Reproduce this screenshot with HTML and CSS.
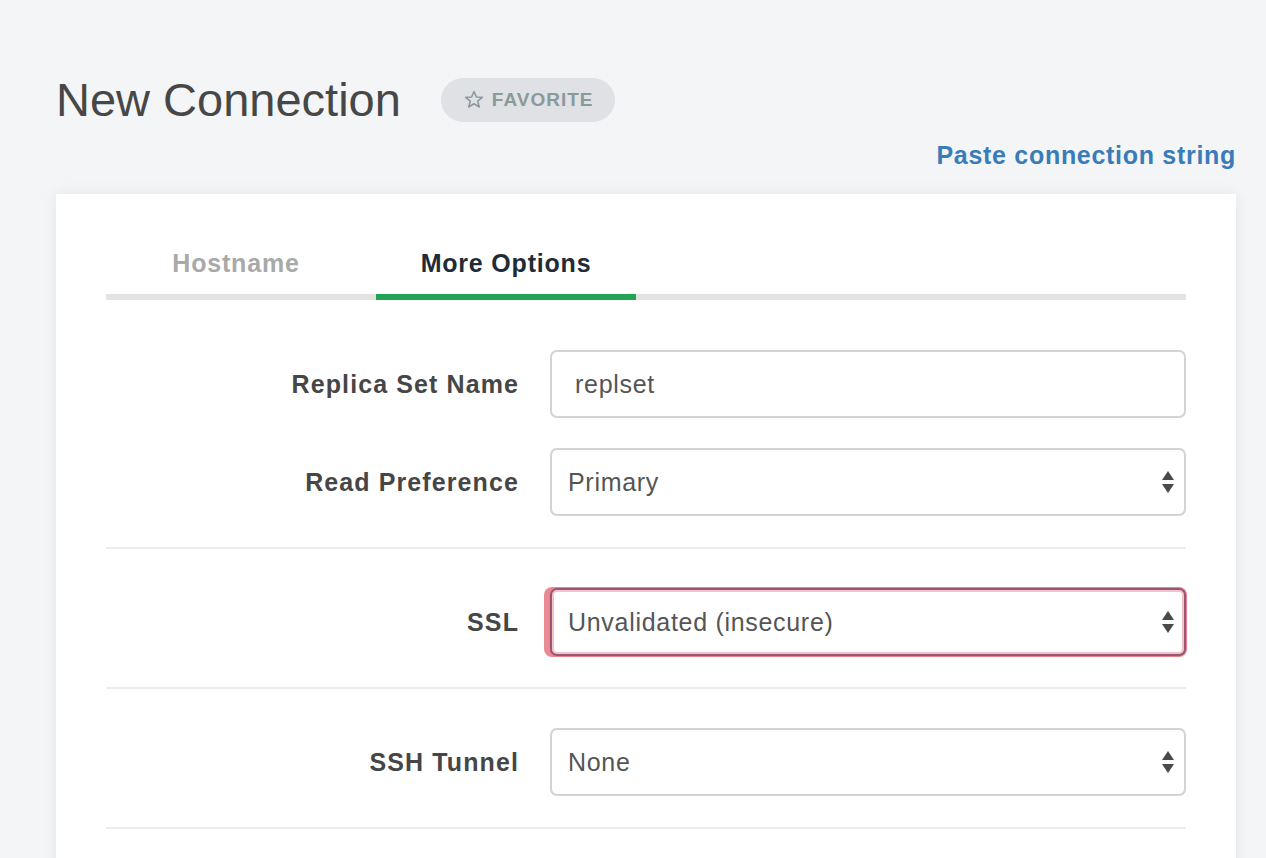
FILE: index.html
```html
<!DOCTYPE html>
<html>
<head>
<meta charset="utf-8">
<link rel="stylesheet" href="styles.css">
</head>
<body>
<div class="page">
  <div class="header">
    <h1 class="title">New Connection</h1>
    <div class="fav-pill">
      <svg class="star" width="20" height="19" viewBox="0 0 20 19"><path d="M10 1.5 L12.4 7 L18.3 7.3 L13.7 11.1 L15.3 17 L10 13.7 L4.7 17 L6.3 11.1 L1.7 7.3 L7.6 7 Z" fill="none" stroke="#8a9a9a" stroke-width="1.6" stroke-linejoin="round"/></svg>
      <span>FAVORITE</span>
    </div>
  </div>
  <div class="paste-row"><a class="paste-link">Paste connection string</a></div>
  <div class="card">
    <div class="tabs">
      <div class="tab">Hostname</div>
      <div class="tab active">More Options</div>
    </div>
    <div class="form">
      <div class="section">
        <div class="row">
          <label class="label">Replica Set Name</label>
          <div class="input">replset</div>
        </div>
        <div class="row">
          <label class="label">Read Preference</label>
          <div class="select"><span>Primary</span>
            <svg class="arrows" width="12" height="22" viewBox="0 0 12 22"><path d="M6 0 L12 9 L0 9 Z M0 13 L12 13 L6 22 Z" fill="#4a4a4a"/></svg>
          </div>
        </div>
      </div>
      <div class="section">
        <div class="row">
          <label class="label">SSL</label>
          <div class="select focused"><span>Unvalidated (insecure)</span>
            <svg class="arrows" width="12" height="22" viewBox="0 0 12 22"><path d="M6 0 L12 9 L0 9 Z M0 13 L12 13 L6 22 Z" fill="#4a4a4a"/></svg>
          </div>
        </div>
      </div>
      <div class="section">
        <div class="row">
          <label class="label">SSH Tunnel</label>
          <div class="select"><span>None</span>
            <svg class="arrows" width="12" height="22" viewBox="0 0 12 22"><path d="M6 0 L12 9 L0 9 Z M0 13 L12 13 L6 22 Z" fill="#4a4a4a"/></svg>
          </div>
        </div>
      </div>
    </div>
  </div>
</div>
</body>
</html>
```

FILE: styles.css
```css
html, body {
  margin: 0;
  padding: 0;
  height: 100%;
  overflow: hidden;
}
body {
  background: #f4f5f7;
  font-family: "Liberation Sans", Arial, Helvetica, sans-serif;
  color: #494949;
}
.page {
  padding: 74px 30px 0 56px;
}
.header {
  display: flex;
  align-items: center;
  gap: 40px;
  height: 52px;
}
.title {
  margin: 0;
  font-size: 47px;
  font-weight: 400;
  line-height: 52px;
  color: #474747;
  letter-spacing: 0;
}
.fav-pill {
  display: flex;
  align-items: center;
  gap: 8px;
  height: 44px;
  padding: 0 22px 0 23px;
  border-radius: 22px;
  background: #dfe1e4;
  color: #8a9a9a;
  font-weight: 700;
  font-size: 19px;
  letter-spacing: 1px;
}
.star {
  display: block;
  margin-top: -1px;
}
.paste-row {
  margin-top: 14px;
  text-align: right;
  line-height: 30px;
}
.paste-link {
  color: #3a7cb7;
  font-weight: 700;
  font-size: 25px;
  letter-spacing: 0.7px;
}
.card {
  margin-top: 20px;
  background: #fff;
  box-shadow: 0 0 14px rgba(0, 0, 0, 0.07);
  padding: 0 50px 40px;
  min-height: 700px;
}
.tabs {
  display: flex;
  gap: 10px;
  padding-top: 54px;
  box-shadow: inset 0 -6px 0 #e3e3e3;
}
.tab {
  width: 260px;
  text-align: center;
  font-size: 25px;
  font-weight: 700;
  line-height: 30px;
  padding-bottom: 16px;
  border-bottom: 6px solid transparent;
  color: #a9a9a9;
  letter-spacing: 0.8px;
}
.tab.active {
  color: #1f2c38;
  border-bottom-color: #22a552;
}
.form {
  padding-top: 9px;
}
.section {
  display: flex;
  flex-direction: column;
  gap: 30px;
  padding: 39px 0 31px;
  border-bottom: 2px solid #ececec;
}
.section:first-child {
  padding-top: 41px;
}
.row {
  display: grid;
  grid-template-columns: 413px 636px;
  column-gap: 31px;
  align-items: center;
}
.label {
  text-align: right;
  font-size: 25px;
  font-weight: 700;
  color: #464646;
  letter-spacing: 1.1px;
}
.input, .select {
  box-sizing: border-box;
  height: 68px;
  border: 2px solid #d3d3d3;
  border-radius: 7px;
  background: #fff;
  font-size: 25px;
  letter-spacing: 0.7px;
  color: #555;
  display: flex;
  align-items: center;
}
.input {
  padding-left: 23px;
}
.select {
  padding: 0 10px 0 16px;
  justify-content: space-between;
}
.select.focused {
  border: 2px solid #9a5677;
  box-shadow: inset 0 0 0 2px #f3c3c8, 0 0 0 1px #e7838c, -5px 0 0 1px #e98b93;
}
.arrows {
  display: block;
}
```
